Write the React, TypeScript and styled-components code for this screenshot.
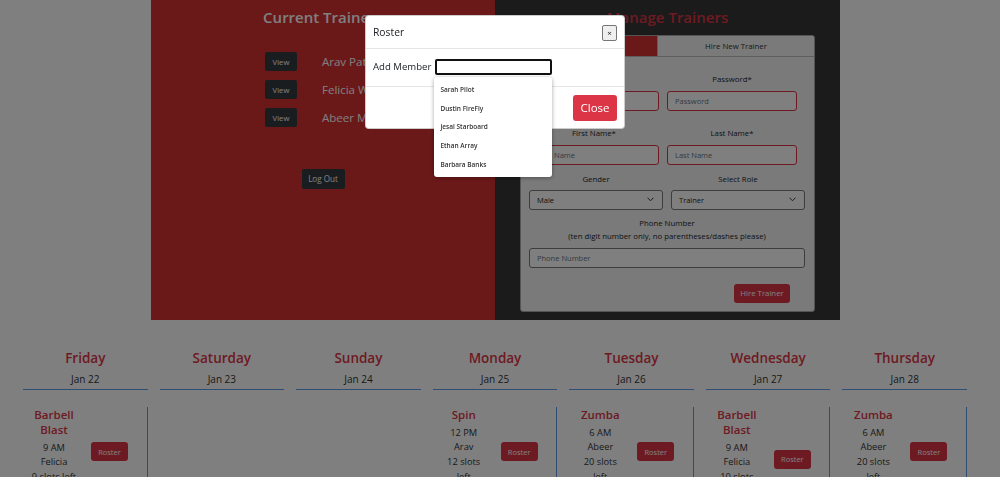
import React from "react";
import styled, { createGlobalStyle } from "styled-components";

const GlobalStyle = createGlobalStyle`
  html, body { margin: 0; padding: 0; overflow: hidden; background: #ffffff; }
  body { font-family: "Open Sans", "Noto Sans", sans-serif; color: #212529; }
  * { box-sizing: border-box; }
  button { font-family: inherit; }
`;

const RED = "#dc3545";
const PANEL_RED = "#d63032";
const BLUE = "#5d9de6";

const Page = styled.div`
  width: 1000px;
  height: 477px;
  overflow: hidden;
`;

const Top = styled.div`
  display: flex;
  width: 689px;
  height: 320px;
  margin-left: 151px;
`;

const TrainersPanel = styled.section`
  width: 344px;
  background: ${PANEL_RED};
  display: flex;
  flex-direction: column;
  align-items: center;
`;

const ManagePanel = styled.section`
  width: 345px;
  background: #373737;
  display: flex;
  flex-direction: column;
  align-items: center;
`;

const PanelTitle = styled.h2<{ $tone: "light" | "red" }>`
  margin: 0;
  padding-top: 7px;
  font-size: 15px;
  line-height: 20px;
  font-weight: 600;
  color: ${(p) => (p.$tone === "light" ? "#ffffff" : RED)};
`;

const TrainerList = styled.div`
  align-self: flex-start;
  margin: 25px 0 0 114px;
  display: flex;
  flex-direction: column;
  gap: 9px;
`;

const TrainerRow = styled.div`
  display: flex;
  align-items: center;
  height: 19px;
`;

const DarkButton = styled.button<{ $w: number; $h: number; $fs: number }>`
  width: ${(p) => p.$w}px;
  height: ${(p) => p.$h}px;
  font-size: ${(p) => p.$fs}px;
  background: #343a40;
  color: #ffffff;
  border: none;
  border-radius: 2px;
  padding: 0;
`;

const TrainerName = styled.span`
  margin-left: 25px;
  font-size: 11.5px;
  color: #ffffff;
  white-space: nowrap;
`;

const LogOutWrap = styled.div`
  margin-top: 38px;
`;

const FormCard = styled.div`
  margin-top: 8px;
  width: 295px;
  height: 277px;
  background: #f4f4f4;
  border: 1px solid #a9a9a9;
  border-radius: 3px;
  overflow: hidden;
`;

const Tabs = styled.div`
  display: flex;
  height: 21px;
  border-bottom: 1px solid #bdbdbd;
`;

const Tab = styled.div<{ $active?: boolean }>`
  flex: ${(p) => (p.$active ? "0 0 136px" : "1")};
  display: flex;
  align-items: center;
  justify-content: center;
  font-size: 7.8px;
  background: ${(p) => (p.$active ? PANEL_RED : "#f4f4f4")};
  color: ${(p) => (p.$active ? "#fff" : "#333")};
  border-left: ${(p) => (p.$active ? "none" : "1px solid #bdbdbd")};
`;

const FormBody = styled.div`
  padding: 0 9px 0 8px;
`;

const FieldRow = styled.div<{ $mt: number }>`
  display: flex;
  gap: 8px;
  margin-top: ${(p) => p.$mt}px;
`;

const Field = styled.div<{ $w: number }>`
  width: ${(p) => p.$w}px;
  display: flex;
  flex-direction: column;
`;

const FieldLabel = styled.label<{ $mt?: number }>`
  display: block;
  text-align: center;
  font-size: 7.8px;
  line-height: 11px;
  color: #212529;
  margin-top: ${(p) => p.$mt ?? 0}px;
`;

const TextInput = styled.input<{ $border: string }>`
  margin-top: 5.5px;
  width: 100%;
  height: 20px;
  border: 1px solid ${(p) => p.$border};
  border-radius: 3px;
  background: #ffffff;
  padding: 0 7px;
  font-family: inherit;
  font-size: 7.5px;
  color: #212529;
  outline: none;
  &::placeholder { color: #6c757d; }
`;

const SelectBox = styled.div`
  margin-top: 4.5px;
  height: 20px;
  border: 1px solid #7a7a7a;
  border-radius: 3px;
  background: #ffffff;
  display: flex;
  align-items: center;
  justify-content: space-between;
  padding: 0 8px 0 7px;
  font-size: 7.5px;
  color: #212529;
`;

const PhoneBlock = styled.div`
  margin-top: 8.5px;
  display: flex;
  flex-direction: column;
`;

const SubmitRow = styled.div`
  display: flex;
  justify-content: flex-end;
  padding-right: 15px;
  margin-top: 16px;
`;

const RedButton = styled.button<{ $w: number; $h: number; $fs: number }>`
  width: ${(p) => p.$w}px;
  height: ${(p) => p.$h}px;
  font-size: ${(p) => p.$fs}px;
  background: ${RED};
  color: #ffffff;
  border: none;
  border-radius: 3px;
  padding: 0;
  flex: none;
`;

const Schedule = styled.div`
  margin: 25px 0 0 17px;
  width: 956px;
  height: 200px;
  background: #ffffff;
  display: grid;
  grid-template-columns: repeat(7, 1fr);
`;

const DayColumn = styled.div`
  padding: 0 6px;
`;

const DayHead = styled.div`
  text-align: center;
  padding: 5px 0 3px;
  border-bottom: 1px solid ${BLUE};
`;

const DayName = styled.div`
  font-size: 13.5px;
  line-height: 17px;
  font-weight: 600;
  color: ${RED};
`;

const DayDate = styled.div`
  margin-top: 5px;
  font-size: 10px;
  line-height: 14px;
  color: #333;
`;

const ClassCard = styled.div`
  margin-top: 17px;
  display: flex;
  align-items: center;
  border-right: 1px solid ${BLUE};
`;

const ClassInfo = styled.div`
  width: 62px;
  padding: 0 8px 7.5px;
  text-align: center;
`;

const ClassTitle = styled.div`
  font-size: 11.5px;
  line-height: 15px;
  font-weight: 600;
  color: ${RED};
  margin-bottom: 3.5px;
`;

const ClassLine = styled.div`
  font-size: 9.3px;
  line-height: 14.7px;
  color: #333;
`;

const ButtonSlot = styled.div`
  padding-left: 6px;
`;

const Overlay = styled.div`
  position: fixed;
  inset: 0;
  background: rgba(0, 0, 0, 0.5);
  z-index: 10;
`;

const Modal = styled.div`
  position: fixed;
  left: 365px;
  top: 15px;
  width: 260px;
  background: #ffffff;
  border: 1px solid rgba(0, 0, 0, 0.2);
  border-radius: 4px;
  z-index: 20;
`;

const ModalHeader = styled.div`
  height: 33px;
  display: flex;
  align-items: center;
  justify-content: space-between;
  padding: 0 7px;
  border-bottom: 1px solid #e3e6e9;
`;

const ModalTitle = styled.div`
  font-size: 10.3px;
  font-weight: 500;
  color: #212529;
`;

const XButton = styled.button`
  width: 15px;
  height: 16px;
  border: 1px solid #767676;
  background: #efefef;
  border-radius: 2px;
  padding: 0;
  font-size: 8px;
  line-height: 1;
  color: #222;
  margin-top: 1px;
`;

const ModalBody = styled.div`
  height: 37px;
  display: flex;
  align-items: center;
  padding: 0 7px 2px;
`;

const AddLabel = styled.span`
  font-size: 9.6px;
  color: #212529;
  margin-right: 4px;
`;

const InputWrap = styled.div`
  position: relative;
`;

const MemberInput = styled.input`
  display: block;
  width: 117px;
  height: 16px;
  border: 2px solid #111;
  border-radius: 2px;
  outline: none;
  background: #fff;
`;

const Suggestions = styled.ul`
  position: absolute;
  left: -1px;
  top: 18px;
  width: 118px;
  margin: 0;
  padding: 3.6px 0;
  list-style: none;
  background: #ffffff;
  border-radius: 3px;
  box-shadow: 0 1px 4px rgba(0, 0, 0, 0.35);
  z-index: 30;
`;

const Suggestion = styled.li`
  height: 18.75px;
  display: flex;
  align-items: center;
  padding-left: 6px;
  font-size: 6.5px;
  font-weight: 600;
  color: #333;
`;

const ModalFooter = styled.div`
  height: 42px;
  border-top: 1px solid #e3e6e9;
  display: flex;
  align-items: center;
  justify-content: flex-end;
  padding: 0 7px;
`;

const Chevron = () => (
  <svg width="7" height="5" viewBox="0 0 7 5" fill="none">
    <path d="M0.8 1 L3.5 3.8 L6.2 1" stroke="#343a40" strokeWidth="1" strokeLinecap="round" strokeLinejoin="round" />
  </svg>
);

type ClassItem = { title: string; time: string; trainer: string; slots: string };
type Day = { name: string; date: string; cls?: ClassItem };

const days: Day[] = [
  { name: "Friday", date: "Jan 22", cls: { title: "Barbell Blast", time: "9 AM", trainer: "Felicia", slots: "9 slots left" } },
  { name: "Saturday", date: "Jan 23" },
  { name: "Sunday", date: "Jan 24" },
  { name: "Monday", date: "Jan 25", cls: { title: "Spin", time: "12 PM", trainer: "Arav", slots: "12 slots left" } },
  { name: "Tuesday", date: "Jan 26", cls: { title: "Zumba", time: "6 AM", trainer: "Abeer", slots: "20 slots left" } },
  { name: "Wednesday", date: "Jan 27", cls: { title: "Barbell Blast", time: "9 AM", trainer: "Felicia", slots: "10 slots left" } },
  { name: "Thursday", date: "Jan 28", cls: { title: "Zumba", time: "6 AM", trainer: "Abeer", slots: "20 slots left" } },
];

const trainers = ["Arav Patel", "Felicia Wong", "Abeer Malik"];
const members = ["Sarah Pilot", "Dustin FireFly", "Jesal Starboard", "Ethan Array", "Barbara Banks"];

export default function App() {
  return (
    <>
      <GlobalStyle />
      <Page>
        <Top>
          <TrainersPanel>
            <PanelTitle $tone="light">Current Trainers</PanelTitle>
            <TrainerList>
              {trainers.map((t) => (
                <TrainerRow key={t}>
                  <DarkButton $w={32} $h={19} $fs={7.7}>View</DarkButton>
                  <TrainerName>{t}</TrainerName>
                </TrainerRow>
              ))}
            </TrainerList>
            <LogOutWrap>
              <DarkButton $w={43} $h={20} $fs={8.1}>Log Out</DarkButton>
            </LogOutWrap>
          </TrainersPanel>
          <ManagePanel>
            <PanelTitle $tone="red">Manage Trainers</PanelTitle>
            <FormCard>
              <Tabs>
                <Tab $active>Edit Trainer</Tab>
                <Tab>Hire New Trainer</Tab>
              </Tabs>
              <FormBody>
                <FieldRow $mt={17}>
                  <Field $w={130}>
                    <FieldLabel>Username*</FieldLabel>
                    <TextInput $border={RED} placeholder="Username" />
                  </Field>
                  <Field $w={130}>
                    <FieldLabel>Password*</FieldLabel>
                    <TextInput $border={RED} placeholder="Password" />
                  </Field>
                </FieldRow>
                <FieldRow $mt={17.5}>
                  <Field $w={130}>
                    <FieldLabel>First Name*</FieldLabel>
                    <TextInput $border={RED} placeholder="First Name" />
                  </Field>
                  <Field $w={130}>
                    <FieldLabel>Last Name*</FieldLabel>
                    <TextInput $border={RED} placeholder="Last Name" />
                  </Field>
                </FieldRow>
                <FieldRow $mt={9.5}>
                  <Field $w={134}>
                    <FieldLabel>Gender</FieldLabel>
                    <SelectBox>
                      <span>Male</span>
                      <Chevron />
                    </SelectBox>
                  </Field>
                  <Field $w={134}>
                    <FieldLabel>Select Role</FieldLabel>
                    <SelectBox>
                      <span>Trainer</span>
                      <Chevron />
                    </SelectBox>
                  </Field>
                </FieldRow>
                <PhoneBlock>
                  <FieldLabel>Phone Number</FieldLabel>
                  <FieldLabel $mt={2}>(ten digit number only, no parentheses/dashes please)</FieldLabel>
                  <TextInput $border="#7a7a7a" placeholder="Phone Number" />
                </PhoneBlock>
                <SubmitRow>
                  <RedButton $w={56} $h={19} $fs={7.8}>Hire Trainer</RedButton>
                </SubmitRow>
              </FormBody>
            </FormCard>
          </ManagePanel>
        </Top>

        <Schedule>
          {days.map((d) => (
            <DayColumn key={d.name}>
              <DayHead>
                <DayName>{d.name}</DayName>
                <DayDate>{d.date}</DayDate>
              </DayHead>
              {d.cls && (
                <ClassCard>
                  <ClassInfo>
                    <ClassTitle>{d.cls.title}</ClassTitle>
                    <ClassLine>{d.cls.time}</ClassLine>
                    <ClassLine>{d.cls.trainer}</ClassLine>
                    <ClassLine>{d.cls.slots}</ClassLine>
                  </ClassInfo>
                  <ButtonSlot>
                    <RedButton $w={37} $h={19} $fs={7.5}>Roster</RedButton>
                  </ButtonSlot>
                </ClassCard>
              )}
            </DayColumn>
          ))}
        </Schedule>
      </Page>

      <Overlay />
      <Modal>
        <ModalHeader>
          <ModalTitle>Roster</ModalTitle>
          <XButton>×</XButton>
        </ModalHeader>
        <ModalBody>
          <AddLabel>Add Member</AddLabel>
          <InputWrap>
            <MemberInput />
            <Suggestions>
              {members.map((m) => (
                <Suggestion key={m}>{m}</Suggestion>
              ))}
            </Suggestions>
          </InputWrap>
        </ModalBody>
        <ModalFooter>
          <RedButton $w={44} $h={26} $fs={11.5}>Close</RedButton>
        </ModalFooter>
      </Modal>
    </>
  );
}
